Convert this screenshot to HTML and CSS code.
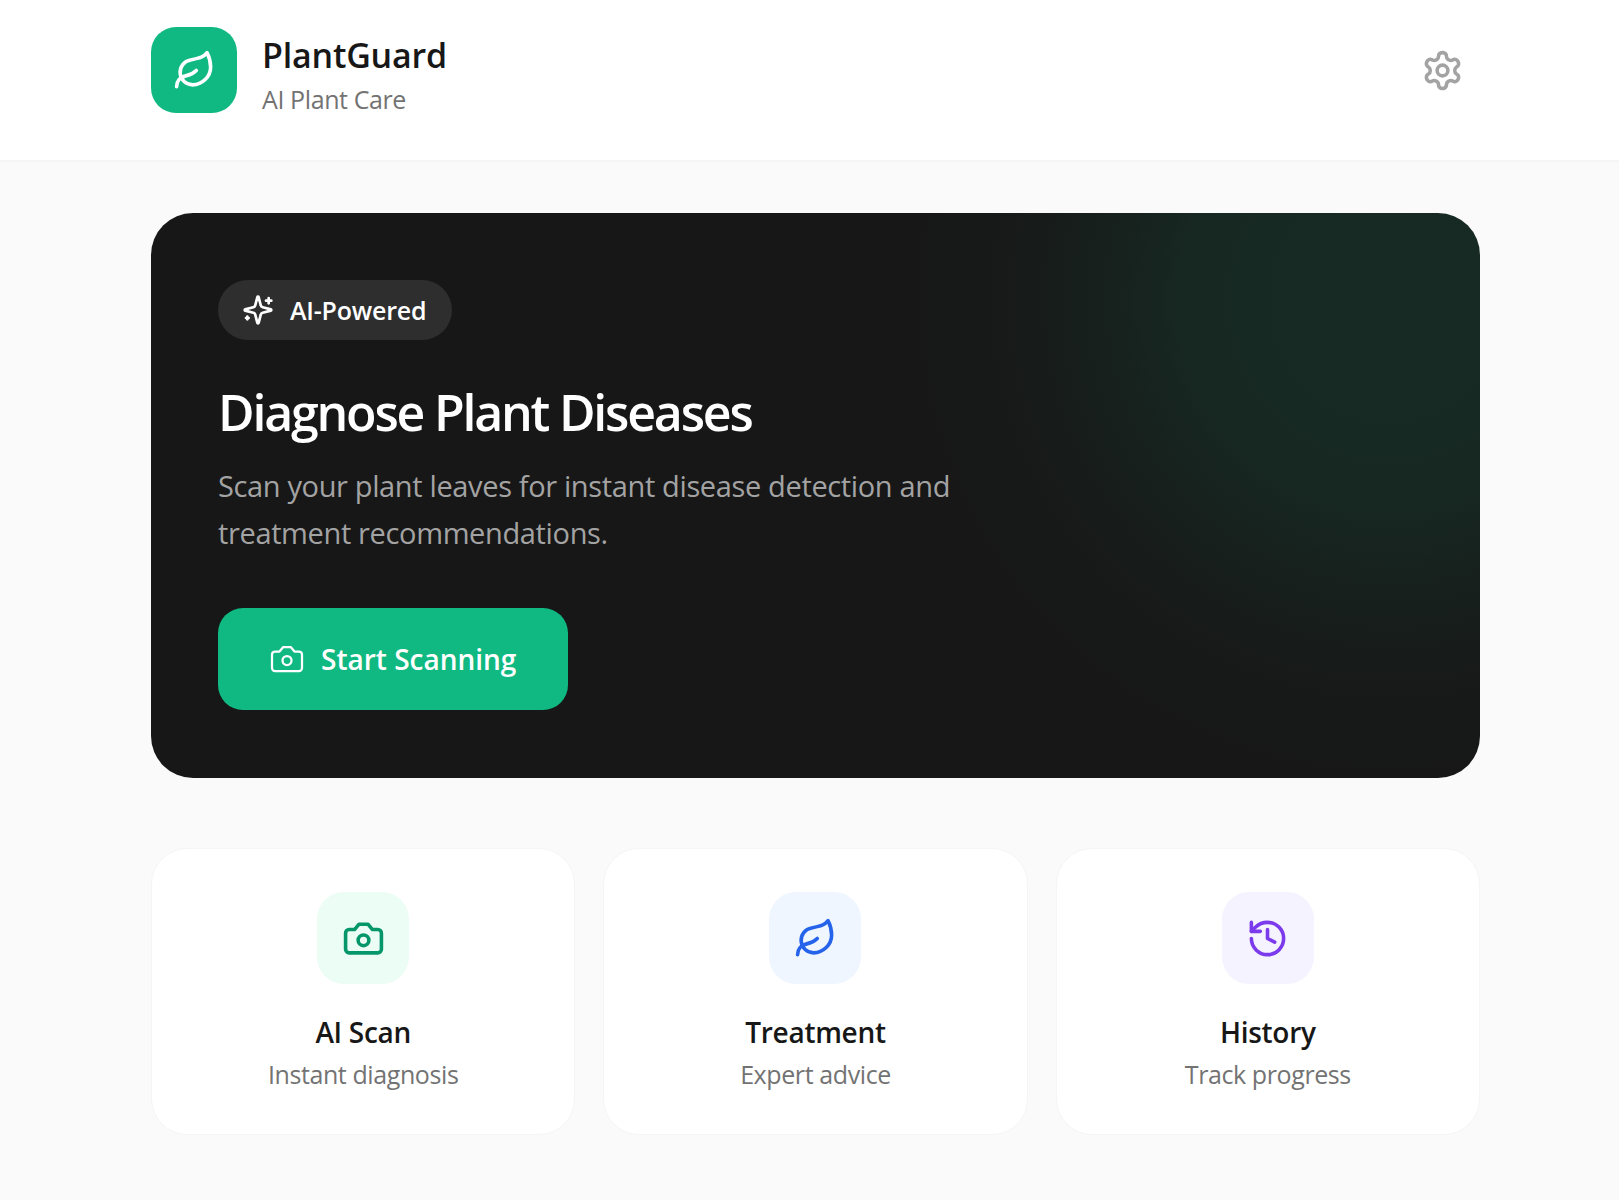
FILE: index.html
```html
<!DOCTYPE html>
<html lang="en">
<head>
  <meta charset="UTF-8" />
  <meta name="viewport" content="width=device-width, initial-scale=1" />
  <title>PlantGuard</title>
  <link rel="stylesheet" href="styles.css">
</head>
<body>

<header class="top-bar">
  <div class="top-inner">
    <div class="brand">
      <div class="brand-logo">
        <svg class="icon" width="43" height="43" viewBox="0 0 24 24">
          <path d="M11 20A7 7 0 0 1 9.8 6.1C15.5 5 17 4.48 19 2c1 2 2 4.18 2 8 0 5.5-4.78 10-10 10Z" />
          <path d="M2 21c0-3 1.85-5.36 5.08-6C9.5 14.52 12 13 13 12" />
        </svg>
      </div>
      <div class="brand-text">
        <h1>PlantGuard</h1>
        <p>AI Plant Care</p>
      </div>
    </div>
    <button class="settings-btn" aria-label="Settings">
      <svg class="icon" width="43" height="43" viewBox="0 0 24 24">
        <path d="M12.22 2h-.44a2 2 0 0 0-2 2v.18a2 2 0 0 1-1 1.73l-.43.25a2 2 0 0 1-2 0l-.15-.08a2 2 0 0 0-2.73.73l-.22.38a2 2 0 0 0 .73 2.73l.15.1a2 2 0 0 1 1 1.72v.51a2 2 0 0 1-1 1.74l-.15.09a2 2 0 0 0-.73 2.73l.22.38a2 2 0 0 0 2.73.73l.15-.08a2 2 0 0 1 2 0l.43.25a2 2 0 0 1 1 1.73V20a2 2 0 0 0 2 2h.44a2 2 0 0 0 2-2v-.18a2 2 0 0 1 1-1.73l.43-.25a2 2 0 0 1 2 0l.15.08a2 2 0 0 0 2.73-.73l.22-.39a2 2 0 0 0-.73-2.73l-.15-.08a2 2 0 0 1-1-1.74v-.5a2 2 0 0 1 1-1.74l.15-.09a2 2 0 0 0 .73-2.73l-.22-.38a2 2 0 0 0-2.73-.73l-.15.08a2 2 0 0 1-2 0l-.43-.25a2 2 0 0 1-1-1.73V4a2 2 0 0 0-2-2z" />
        <circle cx="12" cy="12" r="3" />
      </svg>
    </button>
  </div>
</header>

<main class="content">
  <section class="hero">
    <div class="badge">
      <svg class="icon" width="32" height="32" viewBox="0 0 24 24">
        <path d="M9.937 15.5A2 2 0 0 0 8.5 14.063l-6.135-1.582a.5.5 0 0 1 0-.962L8.5 9.936A2 2 0 0 0 9.937 8.5l1.582-6.135a.5.5 0 0 1 .963 0L14.063 8.5A2 2 0 0 0 15.5 9.937l6.135 1.581a.5.5 0 0 1 0 .964L15.5 14.063a2 2 0 0 0-1.437 1.437l-1.582 6.135a.5.5 0 0 1-.963 0z" />
        <path d="M20 3v4" /><path d="M22 5h-4" /><path d="M4 17v2" /><path d="M5 18H3" />
      </svg>
      <span>AI-Powered</span>
    </div>
    <h2>Diagnose Plant Diseases</h2>
    <p class="hero-text">Scan your plant leaves for instant disease detection and treatment recommendations.</p>
    <button class="scan-btn">
      <svg class="icon thin" width="36" height="36" viewBox="0 0 24 24">
        <path d="M14.5 4h-5L7 7H4a2 2 0 0 0-2 2v9a2 2 0 0 0 2 2h16a2 2 0 0 0 2-2V9a2 2 0 0 0-2-2h-3l-2.5-3z" />
        <circle cx="12" cy="13" r="3" />
      </svg>
      <span>Start Scanning</span>
    </button>
  </section>

  <section class="features">
    <div class="feature-card">
      <div class="feature-icon green">
        <svg class="icon" width="43" height="43" viewBox="0 0 24 24">
          <path d="M14.5 4h-5L7 7H4a2 2 0 0 0-2 2v9a2 2 0 0 0 2 2h16a2 2 0 0 0 2-2V9a2 2 0 0 0-2-2h-3l-2.5-3z" />
          <circle cx="12" cy="13" r="3" />
        </svg>
      </div>
      <h3>AI Scan</h3>
      <p>Instant diagnosis</p>
    </div>
    <div class="feature-card">
      <div class="feature-icon blue">
        <svg class="icon" width="43" height="43" viewBox="0 0 24 24">
          <path d="M11 20A7 7 0 0 1 9.8 6.1C15.5 5 17 4.48 19 2c1 2 2 4.18 2 8 0 5.5-4.78 10-10 10Z" />
          <path d="M2 21c0-3 1.85-5.36 5.08-6C9.5 14.52 12 13 13 12" />
        </svg>
      </div>
      <h3>Treatment</h3>
      <p>Expert advice</p>
    </div>
    <div class="feature-card">
      <div class="feature-icon purple">
        <svg class="icon" width="43" height="43" viewBox="0 0 24 24">
          <path d="M3 12a9 9 0 1 0 9-9 9.75 9.75 0 0 0-6.74 2.74L3 8" />
          <path d="M3 3v5h5" />
          <path d="M12 7v5l4 2" />
        </svg>
      </div>
      <h3>History</h3>
      <p>Track progress</p>
    </div>
  </section>
</main>

</body>
</html>
```

FILE: styles.css
```css
* {
  box-sizing: border-box;
}
body {
  margin: 0;
  min-height: 1200px;
  background: #fafafa;
  color: #171717;
  font-family: "Open Sans", "Noto Sans", sans-serif;
}
h1, h2, h3, p {
  margin: 0;
}
button {
  font-family: inherit;
  border: none;
  cursor: pointer;
}
.icon {
  display: block;
  flex-shrink: 0;
  fill: none;
  stroke: currentColor;
  stroke-width: 2;
  stroke-linecap: round;
  stroke-linejoin: round;
}
.icon.thin {
  stroke-width: 1.5;
}
.top-bar {
  height: 162px;
  background: #fff;
  border-bottom: 2px solid #f5f5f5;
}
.top-inner {
  width: 1329px;
  margin-left: 151px;
  padding-top: 27px;
  display: flex;
  justify-content: space-between;
  align-items: flex-start;
}
.brand {
  display: flex;
  align-items: flex-start;
  gap: 25px;
}
.brand-logo {
  width: 86px;
  height: 86px;
  border-radius: 25px;
  background: #10b981;
  color: #fff;
  display: flex;
  align-items: center;
  justify-content: center;
}
.brand-text {
  padding-top: 4px;
}
.brand-text h1 {
  font-size: 34px;
  font-weight: 600;
  line-height: 48px;
  letter-spacing: -0.2px;
}
.brand-text p {
  margin-top: 2px;
  font-size: 25px;
  line-height: 36px;
  color: #737373;
  letter-spacing: -0.4px;
}
.settings-btn {
  width: 76px;
  height: 86px;
  padding: 0;
  background: none;
  color: #a3a3a3;
  display: flex;
  align-items: center;
  justify-content: center;
}
.content {
  width: 1329px;
  margin-left: 151px;
  padding-top: 51px;
}
.hero {
  height: 565px;
  padding: 67px;
  border-radius: 42px;
  background: radial-gradient(circle 480px at 1239px 87px, #172b24 0%, #172822 42%, #17211e 58%, #171a19 80%, #171717 100%), #171717;
  color: #fff;
}
.badge {
  display: inline-flex;
  align-items: center;
  gap: 16px;
  height: 60px;
  padding: 0 26px 0 24px;
  border-radius: 30px;
  background: #2e2e2e;
  font-size: 25px;
  font-weight: 600;
  letter-spacing: -0.2px;
}
.hero h2 {
  margin-top: 37px;
  font-size: 50px;
  font-weight: 600;
  line-height: 70px;
  letter-spacing: -2.2px;
}
.hero-text {
  max-width: 760px;
  margin-top: 15px;
  font-size: 29px;
  line-height: 47px;
  color: #a3a3a3;
  letter-spacing: -0.36px;
}
.scan-btn {
  display: flex;
  align-items: center;
  gap: 16px;
  width: 350px;
  height: 102px;
  margin-top: 52px;
  padding: 0 0 0 51px;
  border-radius: 25px;
  background: #10b981;
  color: #fff;
  font-size: 28px;
  font-weight: 600;
  letter-spacing: 0;
}
.features {
  display: grid;
  grid-template-columns: repeat(3, 1fr);
  gap: 28px;
  margin-top: 70px;
}
.feature-card {
  height: 287px;
  padding-top: 43px;
  background: #fff;
  border: 1px solid #f5f5f5;
  border-radius: 36px;
  text-align: center;
}
.feature-icon {
  width: 92px;
  height: 92px;
  margin: 0 auto;
  border-radius: 27px;
  display: flex;
  align-items: center;
  justify-content: center;
}
.feature-icon.green {
  background: #ecfdf5;
  color: #059669;
}
.feature-icon.blue {
  background: #eff6ff;
  color: #2563eb;
}
.feature-icon.purple {
  background: #f5f3ff;
  color: #7c3aed;
}
.feature-card h3 {
  margin-top: 26px;
  font-size: 28px;
  font-weight: 600;
  line-height: 44px;
  letter-spacing: -0.3px;
}
.feature-card p {
  font-size: 25px;
  line-height: 40px;
  color: #737373;
  letter-spacing: -0.4px;
}
```
